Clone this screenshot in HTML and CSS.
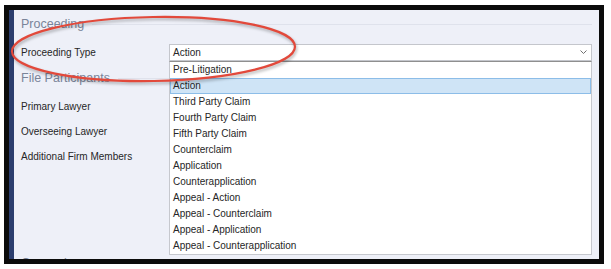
FILE: index.html
```html
<!DOCTYPE html>
<html lang="en">
<head>
    <meta charset="UTF-8">
    <meta name="viewport" content="width=device-width, initial-scale=1.0">
    <title>Proceeding</title>

    <link rel="stylesheet" href="styles.css">

</head>
<body>
    <div class="frame">
        <div class="stripe"></div>

        <div class="panel">
            <!-- Proceeding -->
            <section class="group">
                <h2 class="group-title">Proceeding</h2>
                <div class="row">
                    <label class="row-label">Proceeding Type</label>
                    <div class="select is-open">
                        <span class="select-value">Action</span>
                        <svg class="chevron" width="7" height="4" viewBox="0 0 7 4">
                            <path d="M0.5 0.5 L3.5 3.5 L6.5 0.5" fill="none" stroke="#707070" stroke-width="1"/>
                        </svg>
                        <ul class="options">
                            <li>Pre-Litigation</li>
                            <li class="is-active">Action</li>
                            <li>Third Party Claim</li>
                            <li>Fourth Party Claim</li>
                            <li>Fifth Party Claim</li>
                            <li>Counterclaim</li>
                            <li>Application</li>
                            <li>Counterapplication</li>
                            <li>Appeal - Action</li>
                            <li>Appeal - Counterclaim</li>
                            <li>Appeal - Application</li>
                            <li>Appeal - Counterapplication</li>
                        </ul>
                    </div>
                </div>
            </section>

            <!-- File Participants -->
            <section class="group">
                <h2 class="group-title">File Participants</h2>
                <div class="row">
                    <label class="row-label">Primary Lawyer</label>
                    <div class="field"></div>
                </div>
                <div class="row">
                    <label class="row-label">Overseeing Lawyer</label>
                    <div class="field"></div>
                </div>
                <div class="row">
                    <label class="row-label">Additional Firm Members</label>
                    <div class="field field-tall"></div>
                </div>
            </section>

            <!-- Counsel (cut off by the frame) -->
            <section class="group">
                <h2 class="group-title">Counsel</h2>
            </section>
        </div>
    </div>

    <!-- red marker ring drawn over the screenshot -->
    <svg class="marker" width="611" height="269" viewBox="0 0 611 269">
        <ellipse cx="153.5" cy="49" rx="141.5" ry="32" transform="rotate(-1 153.5 49)"
                 fill="none" stroke="#e2493b" stroke-width="2.2"/>
    </svg>
</body>
</html>
```

FILE: styles.css
```css
/* --- base --- */
* {
    box-sizing: border-box;
}

body {
    margin: 0;
    background-color: #fff;
    font-family: "Liberation Sans", Arial, sans-serif;
    font-size: 10px;
    color: #262626;
}

/* --- outer frame --- */
.frame {
    display: flex;
    width: 600px;
    height: 259px;
    margin: 5px 0 0 4px;
    border: 5px solid #0b0b0b;
    overflow: hidden;
}

.stripe {
    flex: none;
    width: 5px;
    background-color: #2c3e6e;
}

.panel {
    flex: 1;
    background-color: #eef0f8;
    padding: 6px 7px 0 7px;
}

/* --- section headers --- */
.group + .group {
    margin-top: 9px;
}

.group-title {
    display: flex;
    align-items: center;
    height: 16px;
    margin: 0;
    font-size: 12.5px;
    font-weight: normal;
    color: #7a8499;
}

.group-title::after {
    content: "";
    flex: 1;
    height: 1px;
    margin-left: 8px;
    background-color: #dfe2ec;
}

/* --- form rows --- */
.row {
    display: flex;
    align-items: flex-start;
    margin-top: 8px;
}

.group-title + .row {
    margin-top: 12px;
}

.row-label {
    flex: none;
    width: 148px;
    line-height: 17px;
}

.field {
    flex: 1;
    height: 17px;
}

.field-tall {
    height: 98px;
}

/* --- combo box --- */
.select {
    position: relative;
    flex: 1;
    display: flex;
    align-items: center;
    height: 17px;
    padding-left: 3px;
    background-color: #fff;
    border: 1px solid #c4c6cc;
}

.chevron {
    position: absolute;
    right: 4px;
    top: 5px;
}

.options {
    position: absolute;
    top: 16px;
    left: -1px;
    right: -1px;
    margin: 0;
    padding: 0;
    list-style: none;
    background-color: #fff;
    border: 1px solid #c6c8ce;
    border-top-color: #8f8f8f;
}

.options li {
    height: 16px;
    line-height: 16px;
    padding-left: 3px;
}

.options .is-active {
    background-color: #cfe4f6;
    box-shadow: inset 0 0 0 1px #8cbde8;
}

/* --- red marker --- */
.marker {
    position: absolute;
    top: 0;
    left: 0;
    pointer-events: none;
    filter: drop-shadow(1px 2px 1.5px rgba(0, 0, 0, 0.3));
}
```
